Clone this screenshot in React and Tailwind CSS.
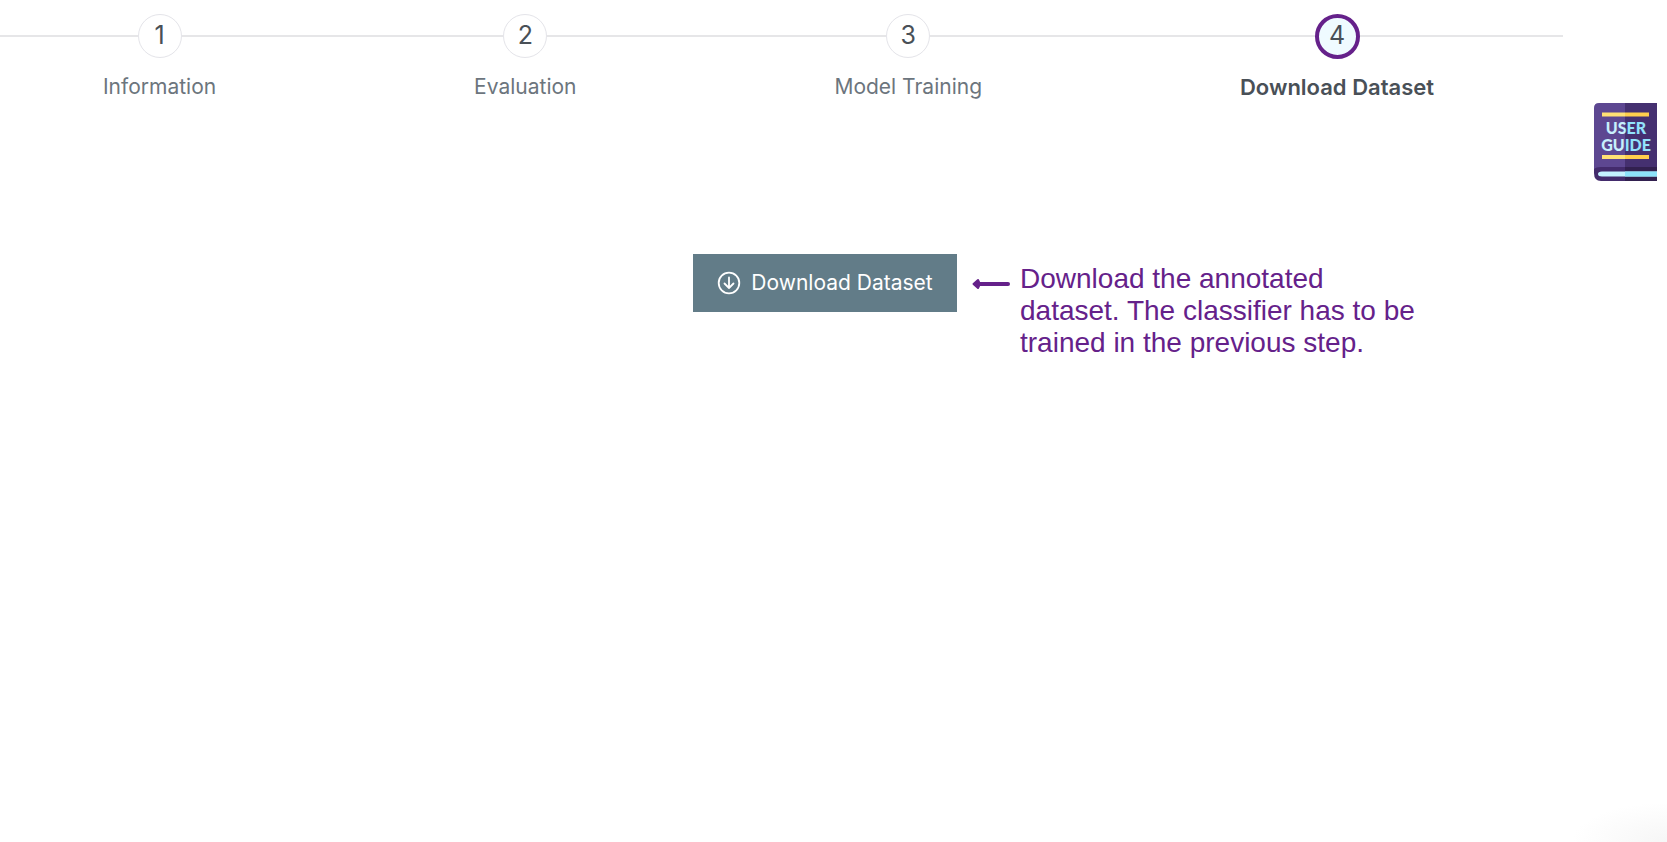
const steps = ['Information', 'Evaluation', 'Model Training', 'Download Dataset'];

function Step({ number, label, current }) {
  return (
    <li className="flex grow flex-col items-center" aria-current={current ? 'step' : undefined}>
      <div className="flex h-12 w-full items-center">
        <span className="h-0.5 grow bg-[#e6e6e8]" />
        <span
          className={
            current
              ? 'flex size-[45px] items-center justify-center rounded-full border-4 border-[#65218a] bg-[#effbff] text-[25px] text-[#495057]'
              : 'flex size-11 items-center justify-center rounded-full border border-[#e4e4e9] bg-white text-[25px] text-[#495057]'
          }
        >
          {number}
        </span>
        <span className="h-0.5 grow bg-[#e6e6e8]" />
      </div>
      <span
        className={
          current
            ? 'mt-[11px] text-[22px] leading-8 font-semibold whitespace-nowrap text-[#495057]'
            : 'mt-[11px] text-[21px] leading-8 whitespace-nowrap text-[#6c757d]'
        }
      >
        {label}
      </span>
    </li>
  );
}

function UserGuide() {
  return (
    <svg viewBox="0 0 63 78" className="h-[78px] w-[63px]" role="img" aria-label="User guide">
      <path d="M5 0H63V67H0V5Q0 0 5 0Z" fill="#5d4791" />
      <path d="M31 0H63V67H31Z" fill="#453070" />
      <path d="M0 66Q2 64 7 64H63V78H7Q0 78 0 70Z" fill="#432b6c" />
      <path d="M31 64H63V78H31Z" fill="#32204f" />
      <path d="M63 68.5H8Q4 68.5 4 71Q4 73.5 8 73.5H63Z" fill="#c4f2ff" />
      <path d="M31 68.5H63V73.5H31Z" fill="#8de2fa" />
      <path d="M8 9.5H31V13.5H8ZM8 52H31V56H8Z" fill="#ffe174" />
      <path d="M31 9.5H55V13.5H31ZM31 52H55V56H31Z" fill="#ffcf4d" />
      <defs>
        <linearGradient id="lettering" gradientUnits="userSpaceOnUse" x1="0" y1="0" x2="63" y2="0">
          <stop offset="0.5" stopColor="#c8f0fc" />
          <stop offset="0.5" stopColor="#92e3fc" />
        </linearGradient>
      </defs>
      <g fill="url(#lettering)" textAnchor="middle" className="font-['Lato',sans-serif] text-[16px] font-black">
        <text x="32" y="31">USER</text>
        <text x="32" y="48">GUIDE</text>
      </g>
    </svg>
  );
}

export default function App() {
  return (
    <div className="flex min-h-screen flex-col overflow-hidden bg-white font-['Inter',sans-serif]">
      <div className="pt-3 pr-[104px]">
        <ol className="-ml-[26px] flex">
          {steps.map((label, i) => (
            <Step key={label} number={i + 1} label={label} current={i === 3} />
          ))}
        </ol>
      </div>

      <div className="flex justify-end pr-2.5">
        <a href="#guide">
          <UserGuide />
        </a>
      </div>

      <main className="grid grow grid-cols-[1fr_264px_1fr] content-start pt-[73px] pr-[17px]">
        <button
          type="button"
          className="col-start-2 flex h-[58px] items-center justify-center gap-2.5 bg-[#627c88] text-[21px] whitespace-nowrap text-white"
        >
          <svg
            viewBox="0 0 24 24"
            className="size-6 shrink-0"
            fill="none"
            stroke="currentColor"
            strokeWidth="1.8"
            strokeLinecap="round"
            strokeLinejoin="round"
            aria-hidden="true"
          >
            <circle cx="12" cy="12" r="10.3" />
            <path d="M12 6.5V17M7.5 12.5L12 17L16.5 12.5" />
          </svg>
          Download Dataset
        </button>
        <div className="flex items-start pt-[9px] pl-[15px]">
          <svg viewBox="0 0 38 12" className="mt-[15px] h-3 w-[38px] shrink-0" aria-hidden="true">
            <path d="M7 6H36" stroke="#65218a" strokeWidth="4" strokeLinecap="round" />
            <path d="M1.5 6L6 2L7 4V8L6 10Z" fill="#65218a" stroke="#65218a" strokeWidth="2" strokeLinejoin="round" />
          </svg>
          <p className="ml-2.5 font-['Liberation_Sans',Arial,sans-serif] text-[28px] leading-8 text-[#65218a]">
            Download the annotated
            <br />
            dataset. The classifier has to be
            <br />
            trained in the previous step.
          </p>
        </div>
      </main>

      <div className="flex justify-end">
        <span className="h-10 w-24 bg-[radial-gradient(ellipse_at_bottom_right,#f6f6f6,#ffffff_70%)]" />
      </div>
    </div>
  );
}
